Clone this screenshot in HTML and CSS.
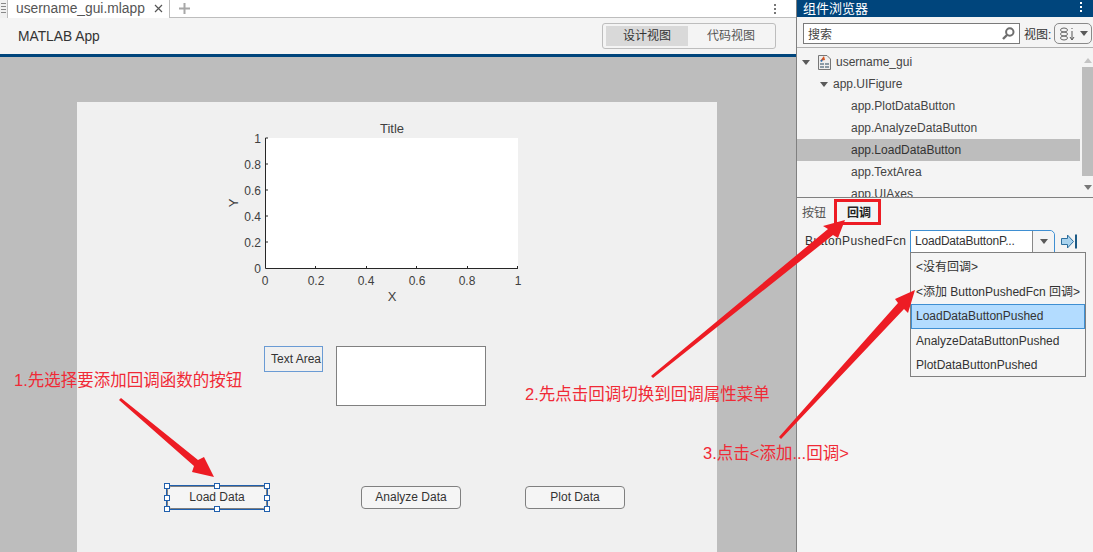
FILE: index.html
```html
<!DOCTYPE html>
<html lang="zh">
<head>
  <meta charset="UTF-8">
  <title>username_gui.mlapp</title>
  <link rel="stylesheet" href="styles.css">
</head>
<body>
  <div id="app">
    <div class="editor">
      <div class="tabbar">
        <span class="tab-menu"><i></i><i></i><i></i><i></i></span>
        <div class="tab">
          <span class="tab-name">username_gui.mlapp</span>
          <svg class="tab-close" width="9" height="9" viewBox="0 0 9 9"><path d="M1 1L8 8M8 1L1 8" stroke="#555" stroke-width="1.2"/></svg>
        </div>
        <svg class="tab-add" width="11" height="11" viewBox="0 0 11 11"><path d="M5.5 0V11M0 5.5H11" stroke="#a8a8a8" stroke-width="2"/></svg>
        <span class="dots tabbar-dots"><i></i><i></i><i></i></span>
      </div>
      <div class="toolbar">
        <span class="app-title">MATLAB App</span>
        <div class="view-switch">
          <span class="view-btn active">设计视图</span>
          <span class="view-btn">代码视图</span>
        </div>
      </div>
      <div class="canvas">
        <div class="figure">
          <svg class="axes" width="310" height="190" viewBox="0 0 310 190">
            <rect x="46" y="23" width="252" height="130" fill="#fff"/>
            <path d="M45.5 23V153.500H298" fill="none" stroke="#262626"/>
            <path d="M45.500 23H48M45.500 49H48M45.500 75H48M45.500 101H48M45.500 127H48M95.500 153V151M146.500 153V151M196.500 153V151M247.500 153V151M297.500 153V151" stroke="#262626"/>
            <g class="tick-y">
              <text x="41" y="28">1</text>
              <text x="41" y="54">0.8</text>
              <text x="41" y="80">0.6</text>
              <text x="41" y="106">0.4</text>
              <text x="41" y="132">0.2</text>
              <text x="41" y="158">0</text>
            </g>
            <g class="tick-x">
              <text x="45" y="170">0</text>
              <text x="96" y="170">0.2</text>
              <text x="146" y="170">0.4</text>
              <text x="197" y="170">0.6</text>
              <text x="247" y="170">0.8</text>
              <text x="298" y="170">1</text>
            </g>
            <text class="axis-label" x="172" y="18">Title</text>
            <text class="axis-label" x="172" y="186">X</text>
            <text class="axis-label" transform="translate(18 88) rotate(-90)">Y</text>
          </svg>

          <div class="label-box">Text Area</div>
          <div class="text-area"></div>

          <button class="btn btn-load">Load Data</button>
          <button class="btn btn-analyze">Analyze Data</button>
          <button class="btn btn-plot">Plot Data</button>

          <div class="select-frame">
            <i class="h h-tl"></i><i class="h h-tc"></i><i class="h h-tr"></i>
            <i class="h h-ml"></i><i class="h h-mr"></i>
            <i class="h h-bl"></i><i class="h h-bc"></i><i class="h h-br"></i>
          </div>
        </div>
      </div>
    </div>

    <div class="side">
      <div class="side-head">
        <span>组件浏览器</span>
        <span class="dots side-dots"><i></i><i></i><i></i></span>
      </div>
      <div class="search-row">
        <div class="search-box">
          <span>搜索</span>
          <svg width="13" height="13" viewBox="0 0 13 13"><circle cx="7.800" cy="5" r="3.700" fill="none" stroke="#6e6e6e" stroke-width="2"/><path d="M5 8L1 12" stroke="#6e6e6e" stroke-width="2.400"/></svg>
        </div>
        <span class="view-label">视图:</span>
        <div class="view-drop">
          <svg width="18" height="14" viewBox="0 0 18 14"><g fill="none" stroke="#666"><ellipse cx="5" cy="3" rx="3.500" ry="2"/><ellipse cx="5" cy="7" rx="3.500" ry="2"/><ellipse cx="5" cy="11" rx="3.500" ry="2"/></g><path d="M13 1V2M13 4V12M11 10L13 13L15 10" fill="none" stroke="#555"/></svg>
          <span class="tri"></span>
        </div>
      </div>

      <div class="tree">
        <div class="tree-list">
          <div class="row row-root">
            <span class="tri"></span>
            <svg class="file-icon" width="14" height="15" viewBox="0 0 14 15"><path d="M1.500 .5H10L13.500 4V14.500H1.500Z" fill="#eee" stroke="#777"/><rect x="3" y="8" width="9" height="5" fill="#8b9aa5"/><path d="M3 10.500H12M7.500 8V13" stroke="#eee"/><path d="M3 6L7 1L8 5Z" fill="#d9541e"/><path d="M3 6L6 4L5 7Z" fill="#1f6fb5"/></svg>
            <span>username_gui</span>
          </div>
          <div class="row row-figure"><span class="tri"></span><span>app.UIFigure</span></div>
          <div class="row row-leaf">app.PlotDataButton</div>
          <div class="row row-leaf">app.AnalyzeDataButton</div>
          <div class="row row-leaf selected">app.LoadDataButton</div>
          <div class="row row-leaf">app.TextArea</div>
          <div class="row row-leaf">app.UIAxes</div>
        </div>
        <div class="scrollbar">
          <span class="tri tri-up"></span>
          <div class="thumb"></div>
          <span class="tri"></span>
        </div>
      </div>

      <div class="props">
        <div class="prop-tabs">
          <span>按钮</span>
          <span class="prop-tab-on">回调</span>
        </div>
        <div class="prop-row">
          <span class="prop-name">ButtonPushedFcn</span>
          <div class="combo">
            <span class="combo-text">LoadDataButtonP...</span>
            <span class="combo-btn"><span class="tri"></span></span>
          </div>
          <svg class="goto" width="17" height="15" viewBox="0 0 17 15"><path d="M.5 4.500H6.500V1L12.500 7.500L6.500 14V10.500H.5Z" fill="#a9d3ee" stroke="#2d6f9e"/><path d="M15 .5V14.500" stroke="#1c5a86" stroke-width="2"/></svg>
        </div>
        <ul class="menu">
          <li>&lt;没有回调&gt;</li>
          <li>&lt;添加 ButtonPushedFcn 回调&gt;</li>
          <li class="on">LoadDataButtonPushed</li>
          <li>AnalyzeDataButtonPushed</li>
          <li>PlotDataButtonPushed</li>
        </ul>
      </div>
    </div>

    <!-- 标注 -->
    <svg class="marks" width="1093" height="552" viewBox="0 0 1093 552">
      <rect x="835.500" y="200.500" width="44" height="23" fill="none" stroke="#ed1c24" stroke-width="3"/>
      <polygon fill="#ed1c24" points="119,400 121,398 198,460 204,457 214,477 192,472 194,466"/>
      <polygon fill="#ed1c24" points="651,376 653,378 833,235 838,238 845,220 823,226 828,229"/>
      <polygon fill="#ed1c24" points="779,437 781,439 904,309 908,313 915,290 895,299 898,303"/>
    </svg>
    <span class="note note-1">1.先选择要添加回调函数的按钮</span>
    <span class="note note-2">2.先点击回调切换到回调属性菜单</span>
    <span class="note note-3">3.点击&lt;添加...回调&gt;</span>
  </div>
</body>
</html>
```

FILE: styles.css
```css
*{
  margin: 0;
  padding: 0;
  box-sizing: border-box;
}

body{
  font-family: "Liberation Sans", "Noto Sans CJK SC", sans-serif;
  font-size: 12px;
  color: #333;
  background: #bdbdbd;
}

#app{
  display: flex;
  width: 1093px;
  height: 552px;
  position: relative;
  overflow: hidden;
}

.tri{
  display: inline-block;
  width: 0;
  height: 0;
  border-left: 4px solid transparent;
  border-right: 4px solid transparent;
  border-top: 5px solid #5a5a5a;
}

.dots{
  display: flex;
  flex-direction: column;
  gap: 2px;
}
.dots>i{
  display: block;
  width: 2px;
  height: 2px;
  background: #777;
}

/* 左侧编辑区 */
.editor{
  display: flex;
  flex-direction: column;
  width: 796px;
}

.tabbar{
  display: flex;
  align-items: center;
  height: 18px;
  background: #fff;
  border-bottom: 1px solid #bdbdbd;
}
.tab-menu{
  display: flex;
  flex-direction: column;
  gap: 1px;
  width: 8px;
  height: 18px;
  padding: 3px 1px 0 1px;
  background: #f0f0f0;
  border-right: 1px solid #bdbdbd;
}
.tab-menu>i{
  display: block;
  height: 1px;
  background: #888;
  margin-bottom: 1px;
}
.tab{
  display: flex;
  align-items: center;
  width: 162px;
  height: 18px;
  padding: 0 0 1px 8px;
  background: #fff;
  border-right: 1px solid #bdbdbd;
  margin-bottom: -1px;
}
.tab-name{
  width: 138px;
  font-size: 13.800px;
  color: #555;
}
.tab-add{
  margin-left: 9px;
}
.tabbar-dots{
  margin-left: auto;
  margin-right: 20px;
}

.toolbar{
  display: flex;
  align-items: center;
  justify-content: space-between;
  height: 36px;
  padding: 0 20px 0 18px;
  background: #f4f4f4;
  border-bottom: 0;
}
.app-title{
  font-size: 13.800px;
  color: #333;
}
.view-switch{
  display: flex;
  justify-content: space-between;
  width: 174px;
  height: 26px;
  padding: 2px 3px;
  border: 1px solid #bdbdbd;
  border-radius: 3px;
}
.view-btn{
  width: 82px;
  line-height: 20px;
  text-align: center;
  color: #555;
}
.view-btn.active{
  background: #d9d9d9;
  color: #333;
}

.canvas{
  flex: 1;
  padding: 45px 0 0 77px;
  background: #bdbdbd;
  border-top: 3px solid #00457c;
}

.figure{
  width: 640px;
  height: 450px;
  background: #f0f0f0;
  position: relative;
}

.axes{
  position: absolute;
  left: 143px;
  top: 13px;
}
.axes text{
  font-family: "Liberation Sans", sans-serif;
  fill: #404040;
}
.tick-y text{
  font-size: 12px;
  text-anchor: end;
}
.tick-x text{
  font-size: 12px;
  text-anchor: middle;
}
.axes .axis-label{
  font-size: 13px;
  text-anchor: middle;
}

.label-box{
  position: absolute;
  left: 187px;
  top: 244px;
  width: 59px;
  height: 26px;
  padding-right: 1px;
  line-height: 24px;
  text-align: right;
  border: 1px solid #6a9bd4;
}
.text-area{
  position: absolute;
  left: 259px;
  top: 244px;
  width: 150px;
  height: 60px;
  background: #fff;
  border: 1px solid #808080;
}

.btn{
  position: absolute;
  top: 384px;
  width: 100px;
  height: 23px;
  padding-bottom: 2px;
  font-family: inherit;
  font-size: 12px;
  color: #333;
  background: #f5f5f5;
  border: 1px solid #808080;
  border-radius: 4px;
}
.btn-load{
  left: 90px;
}
.btn-analyze{
  left: 284px;
}
.btn-plot{
  left: 448px;
}

.select-frame{
  position: absolute;
  left: 89px;
  top: 383px;
  width: 102px;
  height: 25px;
  border: 1px solid #1f5fad;
}
.h{
  position: absolute;
  width: 6px;
  height: 6px;
  background: #fff;
  border: 1px solid #1f5fad;
}
.h-tl,.h-tc,.h-tr{
  top: -3px;
}
.h-ml,.h-mr{
  top: 9px;
}
.h-bl,.h-bc,.h-br{
  bottom: -3px;
}
.h-tl,.h-ml,.h-bl{
  left: -3px;
}
.h-tc,.h-bc{
  left: 47px;
}
.h-tr,.h-mr,.h-br{
  right: -3px;
}

/* 右侧组件浏览器 */
.side{
  display: flex;
  flex-direction: column;
  width: 297px;
  background: #f4f4f4;
  border-left: 1px solid #808080;
}
.side-head{
  display: flex;
  align-items: center;
  justify-content: space-between;
  height: 17px;
  padding: 0 11px 3px 6px;
  font-size: 13px;
  color: #fff;
  background: #00457c;
}
.dots.side-dots>i{
  background: #fff;
}

.search-row{
  display: flex;
  align-items: center;
  height: 31px;
  padding: 3px 1px 0 6px;
  border-bottom: 1px solid #b0b0b0;
}
.search-box{
  display: flex;
  align-items: center;
  justify-content: space-between;
  width: 217px;
  height: 21px;
  padding: 0 4px;
  color: #444;
  background: #fff;
  border: 1px solid #7a7a7a;
}
.view-label{
  margin-left: 4px;
  width: 30px;
  color: #333;
}
.view-drop{
  display: flex;
  align-items: center;
  justify-content: space-between;
  width: 38px;
  height: 21px;
  padding: 0 3px 0 4px;
  border: 1px solid #8a8a8a;
  border-radius: 5px;
}
.view-drop>svg{
  flex: none;
}
.view-drop>.tri{
  flex: none;
}

.tree{
  display: flex;
  height: 150px;
  border-bottom: 1px solid #808080;
}
.tree-list{
  flex: 1;
  padding-top: 3px;
  overflow: hidden;
}
.row{
  display: flex;
  align-items: center;
  height: 22px;
  flex: none;
  color: #444;
}
.row-root{
  padding-left: 5px;
}
.row-root>.tri{
  margin-right: 7px;
}
.row-root>span:last-child{
  margin-left: 5px;
}
.row-figure{
  padding-left: 23px;
}
.row-figure>.tri{
  margin-right: 5px;
}
.row-leaf{
  padding-left: 54px;
}
.row.selected{
  background: #bdbdbd;
  color: #333;
}
.scrollbar{
  display: flex;
  flex-direction: column;
  align-items: center;
  width: 13px;
  padding: 10px 0 6px 2px;
}
.scrollbar>.tri{
  flex: none;
  border-top-color: #777;
}
.scrollbar>.tri-up{
  border-top: 0;
  border-bottom: 5px solid #c4c4c4;
}
.thumb{
  flex: none;
  width: 11px;
  height: 109px;
  margin: 4px 0 9px;
  background: #bdbdbd;
}

.props{
  flex: 1;
  position: relative;
}
.prop-tabs{
  display: flex;
  gap: 21px;
  height: 31px;
  padding: 5px 0 0 5px;
  color: #555;
}
.prop-tab-on{
  font-weight: bold;
  color: #222;
}
.prop-row{
  display: flex;
  align-items: center;
  height: 24px;
  padding-left: 8px;
}
.prop-name{
  width: 105px;
  letter-spacing: .4px;
  white-space: nowrap;
  color: #333;
}
.combo{
  display: flex;
  width: 145px;
  height: 23px;
  background: #fff;
  border: 1px solid #3f8fd2;
  border-top-right-radius: 5px;
}
.combo-text{
  width: 121px;
  padding-left: 4px;
  line-height: 21px;
  letter-spacing: -.2px;
  white-space: nowrap;
}
.combo-btn{
  display: flex;
  align-items: center;
  justify-content: center;
  flex: 1;
  background: #f4f4f4;
  border-left: 1px solid #888;
  border-top-right-radius: 5px;
}
.goto{
  margin-left: 6px;
}

.menu{
  position: absolute;
  left: 113px;
  top: 54px;
  width: 176px;
  height: 125px;
  padding-top: 2px;
  list-style: none;
  background: #f5f5f5;
  border: 1px solid #808080;
}
.menu>li{
  height: 24.500px;
  padding-left: 5px;
  line-height: 25px;
  white-space: nowrap;
  color: #333;
}
.menu>li.on{
  padding-left: 4px;
  background: #b3dcff;
  border: 1px solid #3f8fd2;
  line-height: 23px;
}

/* 标注 */
.marks{
  position: absolute;
  left: 0;
  top: 0;
  pointer-events: none;
}
.note{
  position: absolute;
  font-size: 16.500px;
  line-height: 22px;
  white-space: nowrap;
  color: #f02a36;
}
.note-1{
  left: 14px;
  top: 369px;
}
.note-2{
  left: 525px;
  top: 383px;
}
.note-3{
  left: 703px;
  top: 442px;
}
```
